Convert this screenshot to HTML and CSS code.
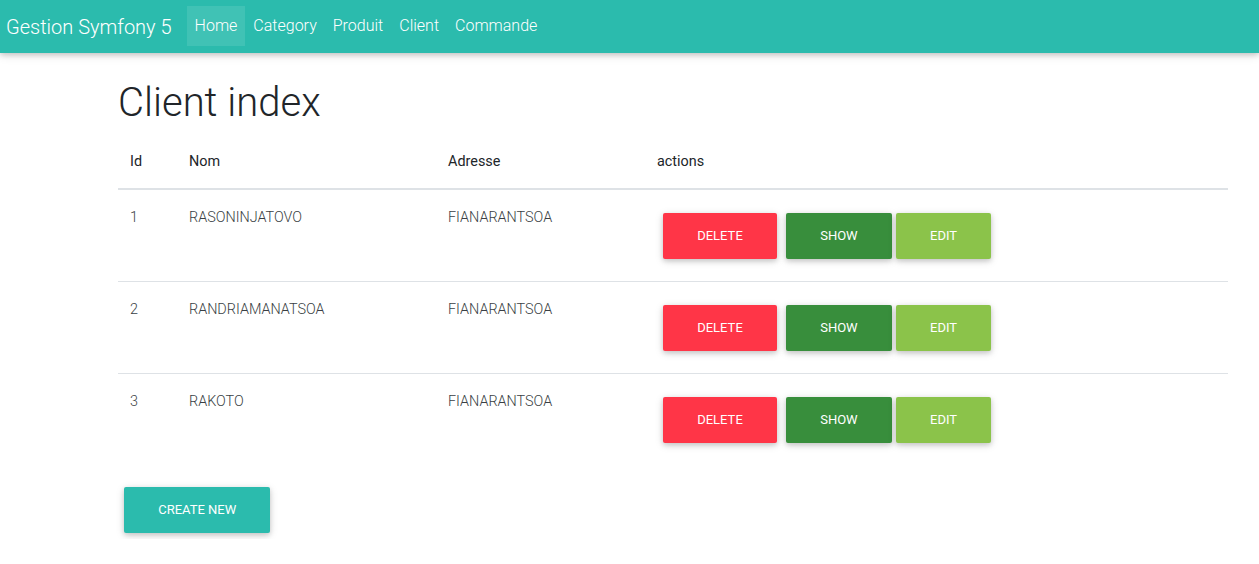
FILE: index.html
```html
<!DOCTYPE html>
<html lang="fr">
<head>
<meta charset="utf-8">
<title>Client index</title>
<link rel="stylesheet" href="styles.css">
</head>
<body>
<nav class="navbar">
  <a class="brand" href="#">Gestion Symfony 5</a>
  <ul class="nav">
    <li><a class="nav-link active" href="#">Home</a></li>
    <li><a class="nav-link" href="#">Category</a></li>
    <li><a class="nav-link" href="#">Produit</a></li>
    <li><a class="nav-link" href="#">Client</a></li>
    <li><a class="nav-link" href="#">Commande</a></li>
  </ul>
</nav>
<main class="container">
  <h1 class="title">Client index</h1>
  <table class="table">
    <thead>
      <tr>
        <th class="c-id">Id</th>
        <th class="c-nom">Nom</th>
        <th class="c-adr">Adresse</th>
        <th>actions</th>
      </tr>
    </thead>
    <tbody>
      <tr>
        <td>1</td><td>RASONINJATOVO</td><td>FIANARANTSOA</td>
        <td><div class="actions"><button class="btn btn-delete">Delete</button><a class="btn btn-show" href="#">Show</a><a class="btn btn-edit" href="#">Edit</a></div></td>
      </tr>
      <tr>
        <td>2</td><td>RANDRIAMANATSOA</td><td>FIANARANTSOA</td>
        <td><div class="actions"><button class="btn btn-delete">Delete</button><a class="btn btn-show" href="#">Show</a><a class="btn btn-edit" href="#">Edit</a></div></td>
      </tr>
      <tr>
        <td>3</td><td>RAKOTO</td><td>FIANARANTSOA</td>
        <td><div class="actions"><button class="btn btn-delete">Delete</button><a class="btn btn-show" href="#">Show</a><a class="btn btn-edit" href="#">Edit</a></div></td>
      </tr>
    </tbody>
  </table>
  <a class="btn btn-create" href="#">Create new</a>
</main>
</body>
</html>
```
FILE: styles.css
```css
* { box-sizing: border-box; }
body {
  margin: 0;
  font-family: Roboto, "Liberation Sans", sans-serif;
  color: #212529;
  background: #fff;
}
a { text-decoration: none; }

.navbar {
  display: flex;
  align-items: center;
  height: 53px;
  padding: 0 6px;
  background: #2bbbad;
  box-shadow: 0 2px 5px 0 rgba(0,0,0,.16), 0 2px 10px 0 rgba(0,0,0,.12);
}
.brand {
  color: #fff;
  font-size: 20px;
  font-weight: 300;
  line-height: 30px;
  margin-right: 15px;
}
.nav {
  display: flex;
  list-style: none;
  margin: 0;
  padding: 0;
}
.nav-link {
  display: block;
  color: #fff;
  font-size: 16px;
  font-weight: 300;
  line-height: 24px;
  padding: 8px 8px;
  margin-top: -1px;
}
.nav-link.active { background: rgba(255,255,255,.1); }

.container {
  width: 1110px;
  margin-left: 118px;
  padding-top: 26px;
}
.title {
  margin: 0 0 6px;
  font-size: 40px;
  font-weight: 300;
  line-height: 48px;
}
.table {
  width: 100%;
  border-collapse: collapse;
  margin-bottom: 16px;
  font-size: 14.4px;
  line-height: 21.6px;
}
.table th {
  text-align: left;
  font-weight: 400;
  padding: 17.6px 12px 16px;
  border-bottom: 2px solid #dee2e6;
}
.table td {
  vertical-align: top;
  font-weight: 300;
  color: #3a3f44;
  padding: 17px 12px 16px;
  border-top: 1px solid #dee2e6;
}
.table tbody tr:first-child td { border-top: 0; }
.c-id { width: 59px; }
.c-nom { width: 259px; }
.c-adr { width: 209px; }

.actions { display: flex; }
.btn {
  display: inline-block;
  border: 0;
  font-family: Roboto, "Liberation Sans", sans-serif;
  font-size: 13px;
  line-height: 19.5px;
  font-weight: 400;
  text-transform: uppercase;
  color: #fff;
  padding: 13.25px 34.2px;
  margin: 6px;
  border-radius: 2px;
  box-shadow: 0 2px 5px 0 rgba(0,0,0,.16), 0 2px 10px 0 rgba(0,0,0,.12);
  cursor: pointer;
}
.btn-delete { background: #ff3547; margin-right: 9px; }
.btn-show { background: #388e3c; margin-left: 0; margin-right: 4px; }
.btn-edit { background: #8bc34a; margin-left: 0; }
.btn-create { background: #2bbbad; }
```
